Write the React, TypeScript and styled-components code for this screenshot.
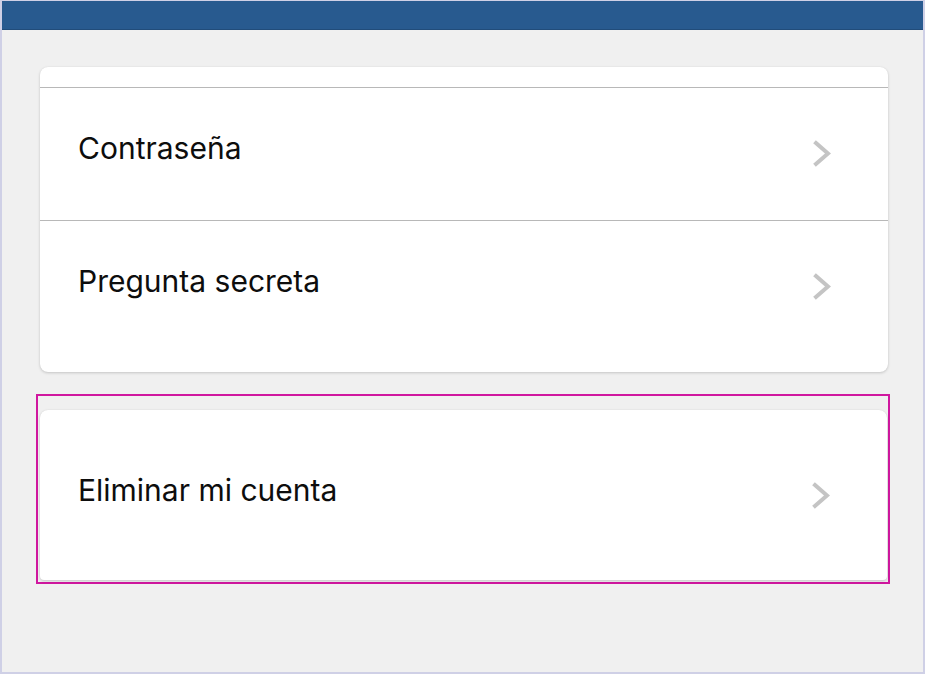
import React from "react";
import styled, { createGlobalStyle } from "styled-components";

const Global = createGlobalStyle`
  html, body { margin: 0; padding: 0; background: #f0f0f0; }
  * { box-sizing: border-box; }
`;

const Frame = styled.div`
  width: 925px;
  height: 674px;
  border: 2px solid #cfd0e6;
  border-top-width: 1px;
  background: #f0f0f0;
  display: flex;
  flex-direction: column;
  font-family: Inter, "Liberation Sans", sans-serif;
  overflow: hidden;
`;

const TopBar = styled.div`
  height: 29px;
  flex: none;
  background: #285a8f;
  border-bottom: 1px solid #214c7a;
`;

const Content = styled.div`
  flex: 1;
  padding: 37px 35px 0 38px;
  display: flex;
  flex-direction: column;
`;

const Card = styled.div<{ $flatBottom?: boolean }>`
  background: #ffffff;
  border-radius: ${(p) => (p.$flatBottom ? "8px 8px 4px 4px" : "8px")};
  box-shadow: 0 1px 3px rgba(0, 0, 0, 0.18), 0 0 1px rgba(0, 0, 0, 0.08);
  display: flex;
  flex-direction: column;
`;

const Spacer = styled.div`
  height: 20px;
`;

const Row = styled.div<{ $h: number; $divider?: boolean }>`
  height: ${(p) => p.$h}px;
  border-top: ${(p) => (p.$divider ? "1px solid #b8b8b8" : "none")};
  display: flex;
  align-items: flex-start;
  justify-content: space-between;
  padding: 0 57px 0 38px;
  cursor: pointer;
`;

const Label = styled.span`
  font-size: 30px;
  line-height: 36px;
  color: #0d0d0d;
  padding-top: 42px;
  letter-spacing: 0;
`;

const Chevron = styled.svg`
  margin-top: 52px;
  width: 18px;
  height: 27px;
  flex: none;
`;

const Highlight = styled.div`
  margin: 22px 0 0 -4px;
  width: 854px;
  border: 2px solid #d0179f;
  padding: 14px 1px 2px 2px;
`;

const Arrow = () => (
  <Chevron viewBox="0 0 18 27">
    <polyline
      points="3,3 15,13.5 3,24"
      fill="none"
      stroke="#c4c4c4"
      strokeWidth="4"
      strokeLinecap="square"
      strokeLinejoin="miter"
    />
  </Chevron>
);

export default function App() {
  return (
    <>
      <Global />
      <Frame>
        <TopBar />
        <Content>
          <Card>
            <Spacer />
            <Row $h={133} $divider>
              <Label>Contraseña</Label>
              <Arrow />
            </Row>
            <Row $h={152} $divider>
              <Label>Pregunta secreta</Label>
              <Arrow />
            </Row>
          </Card>
          <Highlight>
            <Card $flatBottom>
              <Spacer />
              <Row $h={150}>
                <Label>Eliminar mi cuenta</Label>
                <Arrow />
              </Row>
            </Card>
          </Highlight>
        </Content>
      </Frame>
    </>
  );
}
